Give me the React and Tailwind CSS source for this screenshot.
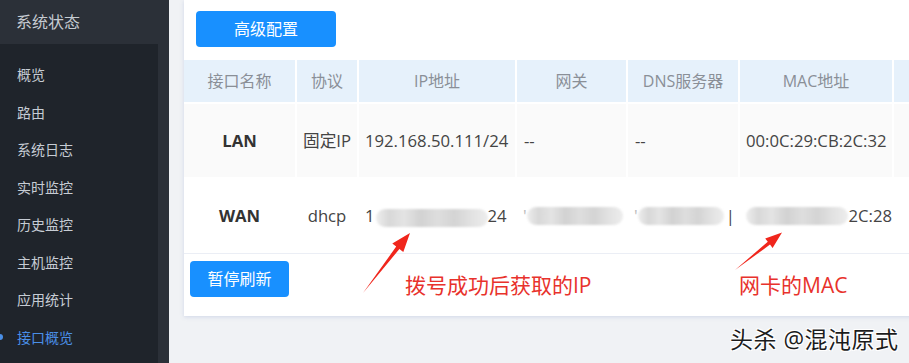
import React from 'react'

const MENU = ['概览', '路由', '系统日志', '实时监控', '历史监控', '主机监控', '应用统计', '接口概览']
const HEAD = ['接口名称', '协议', 'IP地址', '网关', 'DNS服务器', 'MAC地址', '']

const FONT = { fontFamily: '"Open Sans", "Noto Sans CJK SC", sans-serif' }

function Blur({ w }) {
  return (
    <span
      className="inline-block h-[18px] rounded-full blur-[1px] align-middle bg-[linear-gradient(90deg,#eeeeee_0%,#d8d8d8_12%,#e4e4e4_25%,#d2d2d2_40%,#dedede_55%,#d4d4d4_70%,#e2e2e2_85%,#ededed_100%)]"
      style={{ width: w }}
    />
  )
}

function Sidebar() {
  return (
    <div className="w-[169px] h-full shrink-0 bg-[#2b3038] flex flex-col">
      <div className="h-[44px] flex items-center pl-[16px] text-[16px] text-[#c6cbd2]">系统状态</div>
      <div className="w-[158px] flex-1 bg-[#1f242b] pt-[12px]">
        {MENU.map((m, i) => {
          const active = i === MENU.length - 1
          return (
            <div key={m} className={`relative h-[37.5px] flex items-center pl-[17px] text-[14px] ${active ? 'text-[#4a8fe7]' : 'text-[#c6ccd4]'}`}>
              {active && <span className="absolute left-[-3px] top-1/2 -translate-y-1/2 w-[6px] h-[6px] rounded-full bg-[#4a8fe7]" />}
              {m}
            </div>
          )
        })}
      </div>
    </div>
  )
}

function Cell({ children, bg, center, bold }) {
  return (
    <div className={`${bg} flex items-center ${center ? 'justify-center' : 'pl-[6px]'} text-[16.7px] whitespace-nowrap overflow-hidden ${bold ? 'font-bold text-[#333]' : 'text-[#444]'}`}>
      {children}
    </div>
  )
}

export default function App() {
  return (
    <div className="w-[909px] h-[363px] overflow-hidden flex relative bg-[#f0f2f5]" style={FONT}>
      <Sidebar />

      <div className="flex-1 pl-[15px] overflow-hidden">
        <div className="w-[760px] bg-white shadow-[0_1px_4px_rgba(120,140,200,0.25)] pt-[11px] pb-[19px]">
          <div className="pl-[12px] mb-[13px]">
            <button className="w-[140px] h-[36px] rounded-[4px] bg-[#1890ff] text-white text-[16px]">高级配置</button>
          </div>

          <div className="grid grid-cols-[111px_60px_156px_109px_110px_152px_1fr] gap-[2px] grid-rows-[42px_73px_73px]">
            {HEAD.map((h, i) => (
              <div key={i} className="bg-[#e6f1fb] flex items-center justify-center text-[16px] text-[#8a8f97]">{h}</div>
            ))}

            <Cell bg="bg-[#fafafa]" center bold>LAN</Cell>
            <Cell bg="bg-[#fafafa]" center>固定IP</Cell>
            <Cell bg="bg-[#fafafa]">192.168.50.111/24</Cell>
            <Cell bg="bg-[#fafafa]"><span className="pl-[1px]">--</span></Cell>
            <Cell bg="bg-[#fafafa]"><span className="pl-[1px]">--</span></Cell>
            <Cell bg="bg-[#fafafa]">00:0C:29:CB:2C:32</Cell>
            <Cell bg="bg-[#fafafa]" />

            <Cell bg="bg-white" center bold>WAN</Cell>
            <Cell bg="bg-white" center>dhcp</Cell>
            <Cell bg="bg-white">1<span className="ml-[1px]"><Blur w={112} /></span>24</Cell>
            <Cell bg="bg-white"><span className="text-[#bbb]">'</span><Blur w={96} /></Cell>
            <Cell bg="bg-white"><span className="text-[#bbb]">'</span><Blur w={86} /><span className="ml-[2px]">|</span></Cell>
            <Cell bg="bg-white"><Blur w={106} />2C:28</Cell>
            <Cell bg="bg-white" />
          </div>

          <div className="border-t border-[#ebeef5] mt-[1px] pt-[7px] pl-[6px]">
            <button className="w-[99px] h-[36px] rounded-[4px] bg-[#1890ff] text-white text-[16px]">暂停刷新</button>
          </div>
        </div>
      </div>

      {/* annotations */}
      <svg className="absolute inset-0 pointer-events-none" width="909" height="363">
        <polygon fill="#f0261c" points="410,233 403.3,252.1 399.4,249 363,293 396.2,246.6 392.3,243.5" />
        <polygon fill="#f0261c" points="782,232.5 772.6,247.9 770,244.6 735,270 767.8,241.8 765.2,238.5" />
      </svg>
      <div className="absolute left-[405px] top-[272px] text-[21px] leading-[26px] text-[#e8322c]">拨号成功后获取的IP</div>
      <div className="absolute left-[739px] top-[272px] text-[21px] leading-[26px] text-[#e8322c]">网卡的MAC</div>
      <div className="absolute left-[730px] top-[325px] text-[23px] leading-[28px] tracking-[0.5px] text-[#1c1c1c] [text-shadow:1px_1px_0_#fff,-1px_-1px_0_#fff,1px_-1px_0_#fff,-1px_1px_0_#fff]">头杀 @混沌原式</div>
    </div>
  )
}
